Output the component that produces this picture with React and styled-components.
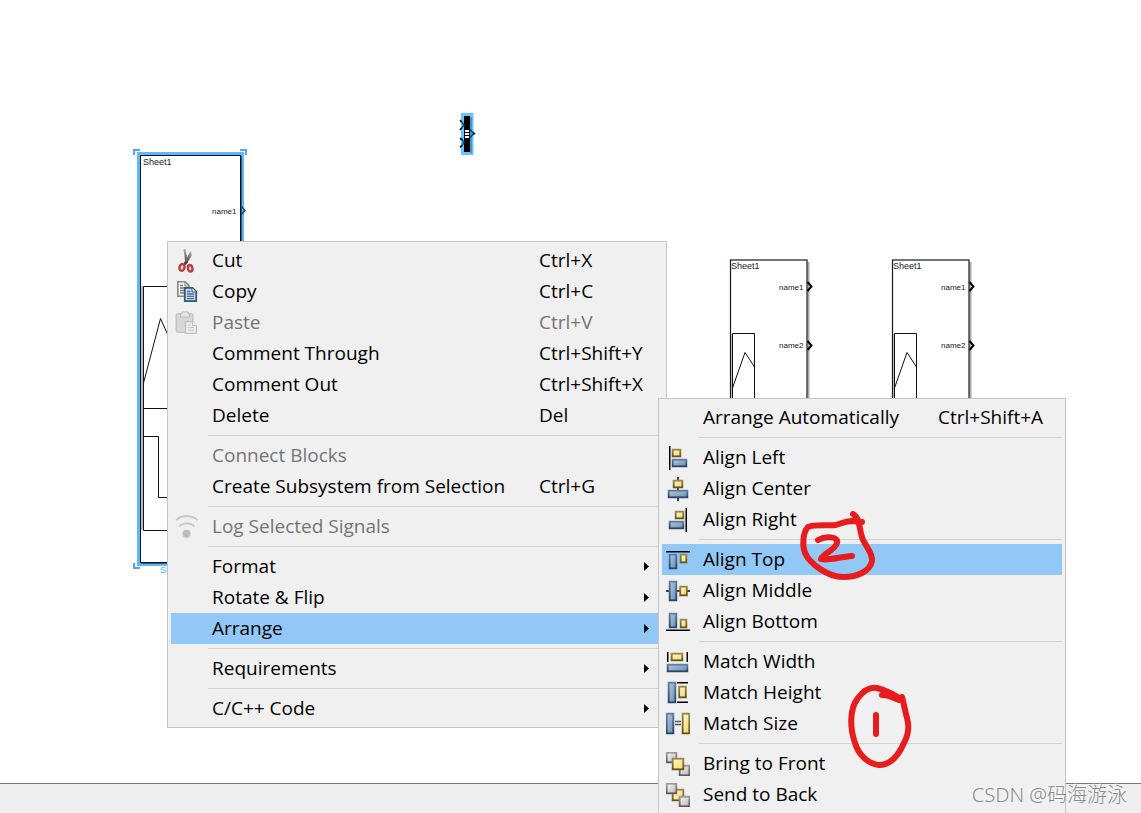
import React from 'react';
import styled, { createGlobalStyle } from 'styled-components';

const GlobalStyle = createGlobalStyle`
  * {
    box-sizing: border-box;
  }
  body {
    margin: 0;
    background: #fff;
    font-family: 'Open Sans', 'Noto Sans', sans-serif;
  }
`;

const Page = styled.div`
  position: relative;
  display: flex;
  flex-direction: column;
  height: 100vh;
  overflow: hidden;
`;

const Canvas = styled.main`
  position: relative;
  flex: 1;
  overflow: hidden;
`;

const StatusBar = styled.footer`
  height: 30px;
  border-top: 1px solid #75757a;
  background: #efefef;
`;

/* blocks are nodes on the free canvas */
const Node = styled.div`
  position: absolute;
  left: ${({ $x }) => $x}px;
  top: ${({ $y }) => $y}px;
  width: ${({ $w }) => $w}px;
  height: ${({ $h }) => $h}px;
  svg {
    display: block;
    overflow: visible;
  }
`;

const NodeLabel = styled.span`
  position: absolute;
  left: ${({ $x }) => $x}px;
  top: ${({ $y }) => $y}px;
  color: ${({ $color }) => $color || '#1a1a1a'};
  font-family: 'Liberation Sans', sans-serif;
  font-size: ${({ $port }) => ($port ? 8 : 9)}px;
  line-height: 12px;
  white-space: nowrap;
`;

const Menu = styled.div`
  position: absolute;
  left: ${({ $x }) => $x}px;
  top: ${({ $y }) => $y}px;
  width: ${({ $w }) => $w}px;
  padding: 3px;
  border: 1px solid #c6c6c6;
  background: #f0f0f0;
`;

const Row = styled.button`
  display: grid;
  grid-template-columns: 41px 1fr 124px;
  align-items: start;
  width: 100%;
  height: 31px;
  padding: 0;
  border: 0;
  background: ${({ $active }) => ($active ? '#91c8f6' : 'transparent')};
  color: #000;
  font-family: inherit;
  font-size: 19px;
  line-height: 31px;
  text-align: left;
  white-space: nowrap;
  &:disabled {
    color: #757575;
  }
`;

const IconCell = styled.span`
  height: 31px;
  padding: 4px;
  svg {
    display: block;
  }
`;

const ArrowCell = styled.span`
  display: flex;
  align-items: center;
  justify-content: flex-end;
  height: 31px;
  padding-right: 14px;
`;

const Divider = styled.hr`
  height: 1px;
  margin: 4px 0 4px 37px;
  border: 0;
  background: #d2d2d2;
`;

const Marks = styled.svg`
  position: absolute;
  left: 0;
  top: 0;
  pointer-events: none;
`;

const Watermark = styled.div`
  position: absolute;
  right: 14px;
  bottom: 4px;
  color: #8a8a8a;
  font-family: 'Noto Sans', 'Noto Sans CJK SC', sans-serif;
  font-size: 20px;
  font-weight: 300;
  line-height: 28px;
  text-shadow: -1px -1px 0 #fafafa;
`;

const Defs = () => (
  <svg width='0' height='0' style={{ position: 'absolute' }} aria-hidden='true'>
    <defs>
      <linearGradient id='blue' x1='0' y1='0' x2='1' y2='1'>
        <stop offset='0' stopColor='#b3cadb' />
        <stop offset='1' stopColor='#6690b1' />
      </linearGradient>
      <linearGradient id='gold' x1='0' y1='0' x2='1' y2='1'>
        <stop offset='0' stopColor='#fffbe0' />
        <stop offset='1' stopColor='#f3d65c' />
      </linearGradient>
      <linearGradient id='grey' x1='0' y1='0' x2='1' y2='1'>
        <stop offset='0' stopColor='#fafafa' />
        <stop offset='1' stopColor='#b5b5b5' />
      </linearGradient>
      <linearGradient id='blueEdge' x1='0' y1='0' x2='0' y2='1'>
        <stop offset='0' stopColor='#5d7fa3' />
        <stop offset='1' stopColor='#2c416b' />
      </linearGradient>
      <linearGradient id='goldEdge' x1='0' y1='0' x2='0' y2='1'>
        <stop offset='0' stopColor='#9b8748' />
        <stop offset='1' stopColor='#66531c' />
      </linearGradient>
      <linearGradient id='greyEdge' x1='0' y1='0' x2='0' y2='1'>
        <stop offset='0' stopColor='#9a9a9a' />
        <stop offset='1' stopColor='#5a5a5a' />
      </linearGradient>
      <linearGradient id='blade' x1='0' y1='0' x2='0' y2='1'>
        <stop offset='0' stopColor='#b0b0b0' />
        <stop offset='1' stopColor='#3c3c3c' />
      </linearGradient>
    </defs>
  </svg>
);

const Box = ({ tone, x, y, w, h }) => (
  <>
    <rect
      x={x}
      y={y}
      width={w}
      height={h}
      fill='none'
      stroke={`url(#${tone}Edge)`}
      strokeOpacity='0.3'
      strokeWidth='1'
    />
    <rect
      x={x + 0.75}
      y={y + 0.75}
      width={w - 1.5}
      height={h - 1.5}
      fill={`url(#${tone})`}
      stroke={`url(#${tone}Edge)`}
      strokeWidth='1.7'
    />
  </>
);

const icons = {
  cut: (
    <>
      <path d='M8.5 0 H10.5 L13 14 L10.5 15 Z' fill='url(#blade)' />
      <path d='M16 1.5 L11.5 9 L8 15.5 L11 16 L16.5 7 Z' fill='url(#blade)' />
      <ellipse cx='7' cy='18.4' rx='2.5' ry='3.4' transform='rotate(14 7 18.4)' fill='#f0dede' stroke='#b93c40' strokeWidth='2.4' />
      <ellipse cx='15.2' cy='19.3' rx='2.2' ry='3.3' transform='rotate(-10 15.2 19.3)' fill='#f0dede' stroke='#b93c40' strokeWidth='2.4' />
    </>
  ),
  copy: (
    <>
      <path d='M2.8 1.8 H10 L14 5.5 V16.2 H2.8 Z' fill='#f4f4f4' stroke='#868686' strokeWidth='1.6' />
      <path d='M10 1.8 V6 H14' fill='none' stroke='#868686' />
      <path d='M5 5.5 H8 M5 8 H11 M5 10.5 H11 M5 13 H11' stroke='#777' strokeWidth='1.3' />
      <path d='M9.8 7.8 H17.5 L21.2 11.5 V21.2 H9.8 Z' fill='#c6d8e8' stroke='#35587f' strokeWidth='1.8' />
      <path d='M17 8 V12 H21' fill='#fff' stroke='#35587f' />
      <path d='M12 11.5 H15.5 M12 14 H19 M12 16.3 H19 M12 18.7 H19' stroke='#47739d' strokeWidth='1.3' />
    </>
  ),
  paste: (
    <>
      <rect x='1.2' y='2.8' width='16.8' height='18.5' rx='2' fill='#d7d7d7' stroke='#c4c4c4' strokeWidth='1.4' />
      <path d='M5.5 6 V3 H7 V1 H13 V3 H14.5 V6 Z' fill='#e8e8e8' stroke='#bababa' />
      <path d='M10.6 10.6 H17.5 L21.4 14.5 V22.4 H10.6 Z' fill='#eee' stroke='#c0c0c0' strokeWidth='1.2' />
      <path d='M17.5 10.6 V14.5 H21.4' fill='#fff' stroke='#c4c4c4' />
      <path d='M13 14 H16 M13 16.6 H19 M13 19.2 H19' stroke='#c4c4c4' />
    </>
  ),
  log: (
    <>
      <path d='M1 5.2 C6 -0.2 17.5 -0.2 22.5 5.2' fill='none' stroke='#c6c6c6' strokeWidth='1.6' />
      <path d='M4 11.5 C8 7.2 15.5 7.2 19.5 11.5' fill='none' stroke='#c6c6c6' strokeWidth='1.8' />
      <circle cx='11.5' cy='18.7' r='4' fill='#bdbdbd' />
    </>
  ),
  left: (
    <>
      <path d='M3.75 0 V24' stroke='#000' strokeWidth='1.5' />
      <Box tone='gold' x={6} y={3} w={9} h={8} />
      <Box tone='blue' x={6} y={13} w={15} h={8} />
    </>
  ),
  center: (
    <>
      <path d='M12 0 V24' stroke='#444' strokeWidth='2' />
      <Box tone='gold' x={7} y={3} w={10} h={8} />
      <Box tone='blue' x={2} y={13} w={20} h={8} />
    </>
  ),
  right: (
    <>
      <path d='M20.25 0 V24' stroke='#000' strokeWidth='1.5' />
      <Box tone='gold' x={9} y={3} w={9} h={8} />
      <Box tone='blue' x={3} y={13} w={15} h={8} />
    </>
  ),
  top: (
    <>
      <path d='M0 3.75 H24' stroke='#000' strokeWidth='1.5' />
      <Box tone='blue' x={3} y={6} w={8} h={15} />
      <Box tone='gold' x={14} y={6} w={7} h={9} />
    </>
  ),
  middle: (
    <>
      <path d='M0 12 H24' stroke='#444' strokeWidth='2' />
      <Box tone='blue' x={3} y={2} w={8} h={20} />
      <Box tone='gold' x={13.5} y={7} w={8} h={10} />
    </>
  ),
  bottom: (
    <>
      <path d='M0 20.25 H24' stroke='#000' strokeWidth='1.5' />
      <Box tone='blue' x={3} y={3} w={8} h={15} />
      <Box tone='gold' x={14} y={9} w={7} h={9} />
    </>
  ),
  width: (
    <>
      <path d='M1.75 2 V12 M21.25 2 V12' stroke='#000' strokeWidth='1.5' />
      <Box tone='gold' x={5} y={3} w={12} h={8} />
      <Box tone='blue' x={1} y={14} w={21} h={8} />
    </>
  ),
  height: (
    <>
      <path d='M11 1.75 H22 M11 21.25 H22' stroke='#000' strokeWidth='1.5' />
      <Box tone='blue' x={2} y={1} w={8} h={21} />
      <Box tone='gold' x={12.5} y={5} w={8} h={12} />
    </>
  ),
  size: (
    <>
      <Box tone='blue' x={0} y={1} w={8} h={21} />
      <Box tone='gold' x={16} y={1} w={8} h={21} />
      <path d='M9 9.5 H15 M9 12.5 H15' stroke='#555' strokeWidth='1.5' />
    </>
  ),
  front: (
    <>
      <Box tone='grey' x={0} y={0} w={11} h={11} />
      <Box tone='grey' x={13} y={13} w={11} h={11} />
      <Box tone='gold' x={6} y={6} w={12} h={12} />
    </>
  ),
  back: (
    <>
      <Box tone='gold' x={6} y={6} w={12} h={12} />
      <Box tone='grey' x={0} y={0} w={11} h={11} />
      <Box tone='grey' x={13} y={13} w={11} h={11} />
    </>
  ),
};

const contextItems = [
  { label: 'Cut', keys: 'Ctrl+X', icon: 'cut' },
  { label: 'Copy', keys: 'Ctrl+C', icon: 'copy' },
  { label: 'Paste', keys: 'Ctrl+V', icon: 'paste', disabled: true },
  { label: 'Comment Through', keys: 'Ctrl+Shift+Y' },
  { label: 'Comment Out', keys: 'Ctrl+Shift+X' },
  { label: 'Delete', keys: 'Del' },
  null,
  { label: 'Connect Blocks', disabled: true },
  { label: 'Create Subsystem from Selection', keys: 'Ctrl+G' },
  null,
  { label: 'Log Selected Signals', icon: 'log', disabled: true },
  null,
  { label: 'Format', sub: true },
  { label: 'Rotate & Flip', sub: true },
  { label: 'Arrange', sub: true, active: true },
  null,
  { label: 'Requirements', sub: true },
  null,
  { label: 'C/C++ Code', sub: true },
];

const arrangeItems = [
  { label: 'Arrange Automatically', keys: 'Ctrl+Shift+A' },
  null,
  { label: 'Align Left', icon: 'left' },
  { label: 'Align Center', icon: 'center' },
  { label: 'Align Right', icon: 'right' },
  null,
  { label: 'Align Top', icon: 'top', active: true },
  { label: 'Align Middle', icon: 'middle' },
  { label: 'Align Bottom', icon: 'bottom' },
  null,
  { label: 'Match Width', icon: 'width' },
  { label: 'Match Height', icon: 'height' },
  { label: 'Match Size', icon: 'size' },
  null,
  { label: 'Bring to Front', icon: 'front' },
  { label: 'Send to Back', icon: 'back' },
];

const MenuList = ({ items, label, x, y, w }) => (
  <Menu role='menu' aria-label={label} $x={x} $y={y} $w={w}>
    {items.map((item, i) =>
      item ? (
        <Row
          key={item.label}
          type='button'
          role='menuitem'
          aria-haspopup={item.sub ? 'menu' : undefined}
          disabled={item.disabled}
          $active={item.active}
        >
          <IconCell>
            {item.icon && (
              <svg width='24' height='24' viewBox='0 0 24 24' aria-hidden='true'>
                {icons[item.icon]}
              </svg>
            )}
          </IconCell>
          <span>{item.label}</span>
          {item.sub ? (
            <ArrowCell>
              <svg width='5' height='9' viewBox='0 0 5 9' aria-hidden='true'>
                <path d='M0 0 L5 4.5 L0 9 Z' fill='#000' />
              </svg>
            </ArrowCell>
          ) : (
            <span>{item.keys}</span>
          )}
        </Row>
      ) : (
        <Divider key={`divider-${i}`} />
      )
    )}
  </Menu>
);

const SelectedBlock = () => (
  <Node $x={133} $y={148} $w={114} $h={430}>
    <svg width='114' height='430' viewBox='0 0 114 430' aria-hidden='true'>
      <rect x='4' y='4' width='107' height='414' fill='#5cb8fb' />
      <rect x='7.5' y='7.5' width='100' height='407' fill='#fff' stroke='#111' />
      <path d='M108.5 8 V415.5 H8' fill='none' stroke='#2f5f86' />
      <rect x='8' y='138' width='2' height='244' fill='#bbb' />
      <path d='M60 138.5 H10.5 V382.5 H60 M10 260.5 H60' fill='none' stroke='#111' />
      <path d='M10.5 235 L27.5 170.5 L34 185 L44 212' fill='none' stroke='#111' />
      <path d='M10 288.5 H25.5 V349.5 H60' fill='none' stroke='#111' />
      <path d='M108 58 L112 62.5 L108 67' fill='none' stroke='#0d4a78' strokeWidth='1.5' />
      <path d='M1 7 V2 H7 M107 2 H113 V7 M1 415 V420 H7' fill='none' stroke='#5c9ff5' strokeWidth='2' />
    </svg>
    <NodeLabel $x={10} $y={8}>Sheet1</NodeLabel>
    <NodeLabel $x={79} $y={58} $port>name1</NodeLabel>
    <NodeLabel $x={27} $y={416} $color='#3fa9f5'>Signal Builder</NodeLabel>
  </Node>
);

const MuxBlock = () => (
  <Node $x={459} $y={113} $w={17} $h={42}>
    <svg width='17' height='42' viewBox='0 0 17 42' aria-hidden='true'>
      <rect x='2' y='0' width='12.5' height='42' fill='#6cc2fc' />
      <rect x='11' y='4' width='2' height='36' fill='#3f96d4' />
      <rect x='5' y='3' width='6' height='36' fill='#000' />
      <path d='M6 18 H10 M6 21 H10 M6 24 H10' stroke='#fff' strokeWidth='2' />
      <path d='M2 8 L5 12 L2 16 M2 25 L5 29.5 L2 34 M11 16.5 L15 20.5 L11 24.5' fill='none' stroke='#0a4a78' strokeWidth='1.5' />
      <path d='M1 7 L2.5 9 M1 17 L2.5 15 M1 25 L2.5 27 M1 34.5 L2.5 32.5 M14 19.5 L15.5 20.5 L14 21.5' fill='none' stroke='#000' strokeWidth='1.3' />
    </svg>
  </Node>
);

const SheetBlock = ({ x }) => (
  <Node $x={x} $y={259} $w={84} $h={320}>
    <svg width='84' height='320' viewBox='0 0 84 320' aria-hidden='true'>
      <path d='M78.5 3 V310' stroke='#aaa' strokeWidth='2' />
      <rect x='0.5' y='1' width='76.5' height='310' fill='#fff' stroke='#1a1a1a' strokeWidth='1.2' />
      <path d='M1.5 75 V310' stroke='#bbb' />
      <path d='M2.5 310 V74.5 H24.5 V310' fill='none' stroke='#111' />
      <path d='M2.5 129 L15 93.5 L24.5 108' fill='none' stroke='#111' />
      <path d='M77.5 23 L81.5 27.5 L77.5 32 M77.5 82 L81.5 86.5 L77.5 91' fill='none' stroke='#000' strokeWidth='2' />
    </svg>
    <NodeLabel $x={1} $y={1}>Sheet1</NodeLabel>
    <NodeLabel $x={49} $y={23} $port>name1</NodeLabel>
    <NodeLabel $x={49} $y={81} $port>name2</NodeLabel>
  </Node>
);

const App = () => {
  return (
    <Page>
      <GlobalStyle />
      <Defs />
      <Canvas>
        <SelectedBlock />
        <MuxBlock />
        <SheetBlock x={730} />
        <SheetBlock x={892} />
      </Canvas>
      <StatusBar />
      <MenuList items={contextItems} label='Block' x={167} y={241} w={500} />
      <MenuList items={arrangeItems} label='Arrange' x={658} y={398} w={408} />
      {/* hand-drawn step numbers */}
      <Marks width='1141' height='813' viewBox='0 0 1141 813' aria-hidden='true'>
        <g fill='none' stroke='#e81c1c' strokeWidth='6' strokeLinecap='round' strokeLinejoin='round'>
          <path d='M853 514 C860 518 859 528 862 537 C864 545 873 552 872 561 C870 571 858 577 843 577 C828 577 810 564 805 553 C802 545 803 532 808 527 C814 524 828 526 836 525 C842 523 846 521 852 521 L862 522' />
          <path d='M818 540 C825 536 839 536 837 543 C835 550 824 553 821 559 C827 561 839 557 852 556' />
          <path d='M882 695 C889 695 894 698 899 700 L902 697 C904 704 905 711 907 718 C909 725 909 734 904 743 C900 752 893 765 879 765 C869 764 859 756 855 743 C850 729 849 709 858 698 C864 690 871 687 877 688 C885 690 893 694 901 699' />
          <path d='M876 715 V734' />
        </g>
      </Marks>
      <Watermark>CSDN @码海游泳</Watermark>
    </Page>
  );
};

export default App;
